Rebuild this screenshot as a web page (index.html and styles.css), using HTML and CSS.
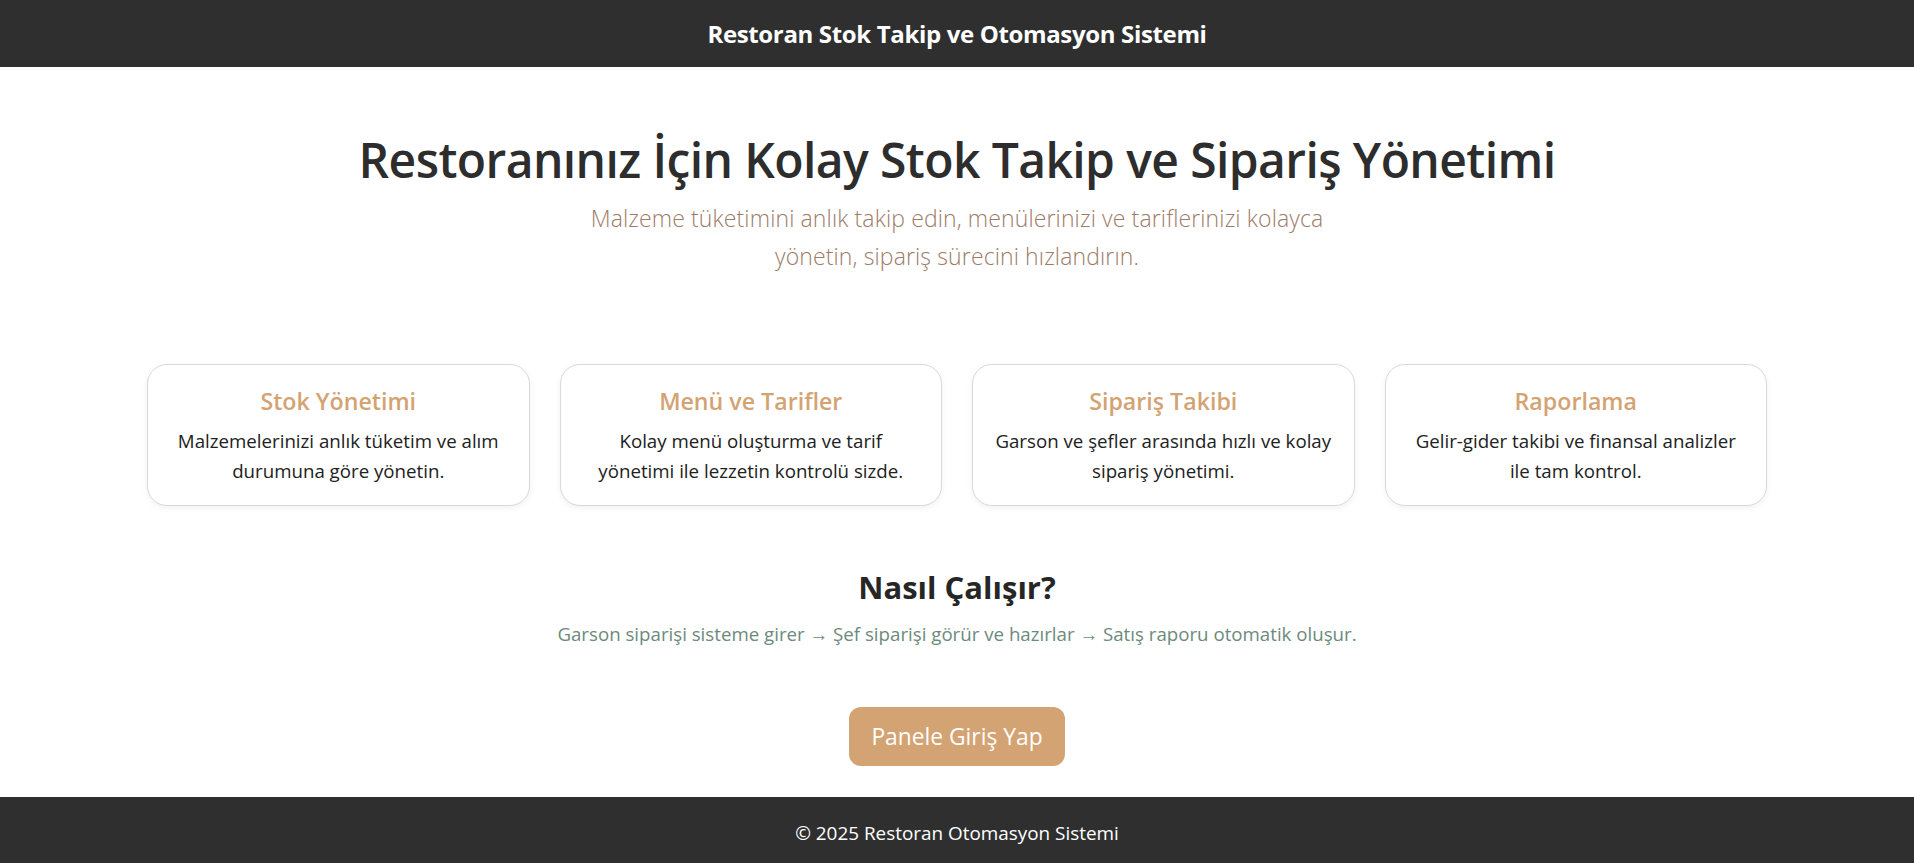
FILE: index.html
```html
<!DOCTYPE html>
<html lang="tr">
<head>
<meta charset="utf-8">
<title>Restoran Stok Takip ve Otomasyon Sistemi</title>
<link rel="stylesheet" href="styles.css">
</head>
<body>
<header class="topbar">
  <div class="topbar-title">Restoran Stok Takip ve Otomasyon Sistemi</div>
</header>
<main class="main">
  <section class="hero">
    <h1 class="hero-title">Restoranınız İçin Kolay Stok Takip ve Sipariş Yönetimi</h1>
    <p class="hero-lead">Malzeme tüketimini anlık takip edin, menülerinizi ve tariflerinizi kolayca yönetin, sipariş sürecini hızlandırın.</p>
  </section>
  <section class="features">
    <div class="card">
      <h4 class="card-title">Stok Yönetimi</h4>
      <p class="card-text">Malzemelerinizi anlık tüketim ve alım durumuna göre yönetin.</p>
    </div>
    <div class="card">
      <h4 class="card-title">Menü ve Tarifler</h4>
      <p class="card-text">Kolay menü oluşturma ve tarif yönetimi ile lezzetin kontrolü sizde.</p>
    </div>
    <div class="card">
      <h4 class="card-title">Sipariş Takibi</h4>
      <p class="card-text">Garson ve şefler arasında hızlı ve kolay sipariş yönetimi.</p>
    </div>
    <div class="card">
      <h4 class="card-title">Raporlama</h4>
      <p class="card-text">Gelir-gider takibi ve finansal analizler ile tam kontrol.</p>
    </div>
  </section>
  <section class="how">
    <h2 class="how-title">Nasıl Çalışır?</h2>
    <p class="how-steps">Garson siparişi sisteme girer → Şef siparişi görür ve hazırlar → Satış raporu otomatik oluşur.</p>
  </section>
  <div class="cta">
    <a class="btn" href="#">Panele Giriş Yap</a>
  </div>
</main>
<footer class="footer">
  <p class="footer-text">© 2025 Restoran Otomasyon Sistemi</p>
</footer>
</body>
</html>
```
FILE: styles.css
```css
* { box-sizing: border-box; }
body {
  margin: 0;
  font-family: "Open Sans", "Noto Sans", sans-serif;
  color: #212529;
  background: #fff;
}
.topbar {
  background: #2f2f2f;
  height: 67px;
  display: flex;
  align-items: center;
  justify-content: center;
}
.topbar-title {
  color: #fff;
  font-weight: 700;
  font-size: 24px;
  letter-spacing: -0.35px;
  line-height: 67px;
}
.main { display: flex; flex-direction: column; align-items: center; }
.hero { padding-top: 64px; text-align: center; }
.hero-title {
  margin: 0;
  font-size: 48px;
  font-weight: 600;
  letter-spacing: -0.6px;
  line-height: 58px;
  color: #2d2d2d;
}
.hero-lead {
  margin: 10px auto 0;
  max-width: 760px;
  font-size: 23px;
  font-weight: 300;
  letter-spacing: 0.12px;
  line-height: 38px;
  color: #9d7b69;
}
.features {
  margin-top: 89px;
  width: 1620px;
  display: grid;
  grid-template-columns: repeat(4, 1fr);
  gap: 30px;
}
.card {
  border: 1px solid #d9d9d9;
  border-radius: 20px;
  padding: 20px 19px 19px;
  text-align: center;
  box-shadow: 0 2px 6px rgba(0, 0, 0, 0.06);
  background: #fff;
}
.card-title {
  margin: 0;
  font-size: 23.2px;
  font-weight: 600;
  line-height: 32px;
  color: #d4a373;
}
.card-text {
  margin: 9px 0 0;
  font-size: 18.7px;
  line-height: 30px;
  color: #212121;
}
.how { margin-top: 61px; text-align: center; }
.how-title {
  margin: 0;
  font-size: 31px;
  font-weight: 700;
  line-height: 40px;
  color: #262626;
}
.how-steps {
  margin: 13px 0 0;
  font-size: 18.7px;
  line-height: 28px;
  color: #6d8a7c;
}
.cta { margin-top: 59px; margin-bottom: 31px; }
.btn {
  display: inline-block;
  background: #d4a373;
  color: #fff;
  text-decoration: none;
  font-size: 22.8px;
  line-height: 31px;
  padding: 14px 22px;
  border-radius: 12px;
}
.footer {
  background: #2f2f2f;
  height: 66px;
  display: flex;
  align-items: center;
  justify-content: center;
  padding-top: 5px;
}
.footer-text {
  margin: 0;
  color: #fff;
  font-size: 18.9px;
  line-height: 28px;
}
```
